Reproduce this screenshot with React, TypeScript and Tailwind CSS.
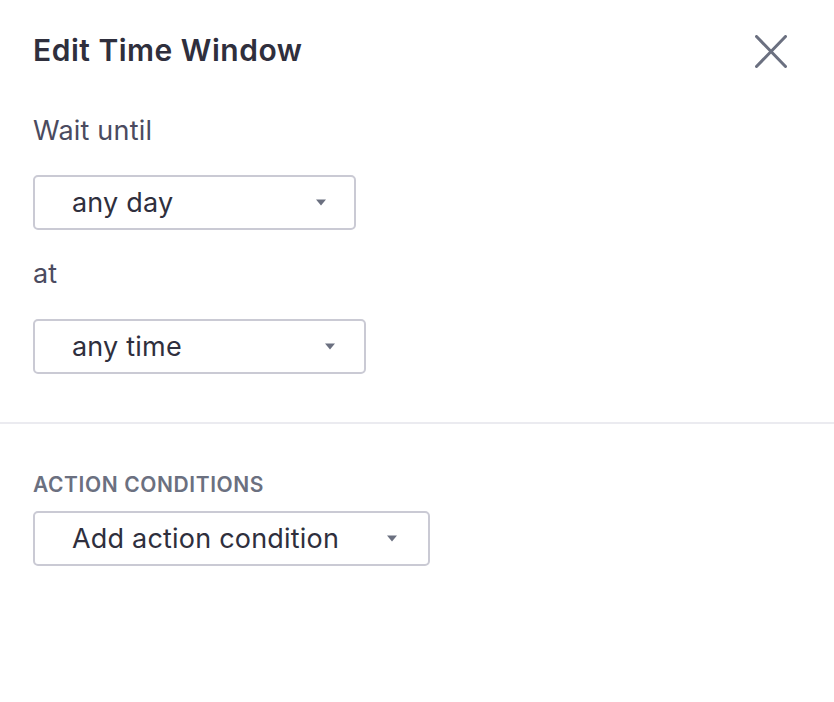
import React from 'react';

const Caret: React.FC = () => (
  <svg width="10" height="7" viewBox="0 0 10 7" className="shrink-0">
    <path d="M0 0.5 L10 0.5 L5 6.5 Z" fill="#6b7080" />
  </svg>
);

const Dropdown: React.FC<{ label: string; width: string; gap: string }> = ({ label, width, gap }) => (
  <button
    className={`flex items-center h-[55px] pl-[37px] border-2 border-[#cacad4] rounded-[5px] bg-white text-[27px] tracking-[0.2px] text-[#2f2f3d] ${width}`}
  >
    <span className="leading-none">{label}</span>
    <span className={gap}>
      <Caret />
    </span>
  </button>
);

const App: React.FC = () => {
  return (
    <div className="w-[834px] h-[702px] bg-white font-['Inter',sans-serif] overflow-hidden">
      {/* Time window */}
      <div className="px-[33px] pt-[32px] pb-[48px]">
        <div className="flex items-start justify-between">
          <h1 className="text-[30px] leading-[36px] font-semibold tracking-[0.5px] text-[#2f2f3d]">Edit Time Window</h1>
          <button className="mt-[3px] mr-[14px] text-[#6b7080]">
            <svg width="32" height="33" viewBox="0 0 32 33" fill="none">
              <path d="M1.5 1.5 L30.5 31.5 M30.5 1.5 L1.5 31.5" stroke="currentColor" strokeWidth="3" strokeLinecap="round" />
            </svg>
          </button>
        </div>

        <p className="mt-[47px] text-[27px] leading-[32px] tracking-[0.2px] text-[#4b4b60]">Wait until</p>
        <div className="mt-[28px]">
          <Dropdown label="any day" width="w-[323px]" gap="ml-auto mr-[28px]" />
        </div>

        <p className="mt-[28px] text-[27px] leading-[32px] tracking-[0.2px] text-[#4b4b60]">at</p>
        <div className="mt-[29px]">
          <Dropdown label="any time" width="w-[333px]" gap="ml-auto mr-[29px]" />
        </div>
      </div>

      <div className="h-[2px] bg-[#ebebf0]" />

      {/* Action conditions */}
      <div className="px-[33px] pt-[48px]">
        <h2 className="text-[21px] leading-[26px] font-semibold tracking-[0.6px] uppercase text-[#6b7080]">
          Action conditions
        </h2>
        <div className="mt-[13px]">
          <Dropdown label="Add action condition" width="w-[397px]" gap="ml-auto mr-[31px]" />
        </div>
      </div>
    </div>
  );
};

export default App;
